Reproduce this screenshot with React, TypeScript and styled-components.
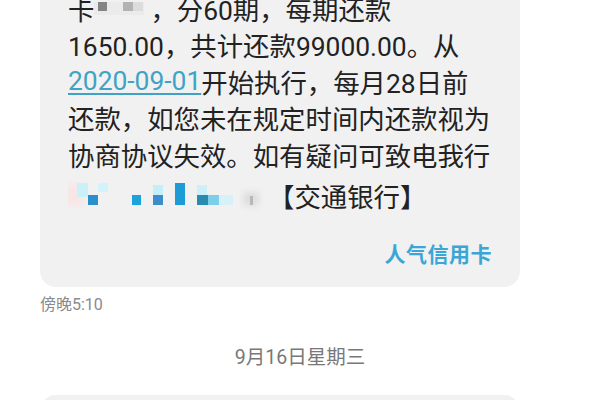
import React from "react";
import styled, { createGlobalStyle } from "styled-components";

const Global = createGlobalStyle`
  html, body { margin: 0; padding: 0; background: #ffffff; }
  body { width: 600px; height: 400px; overflow: hidden; font-family: Roboto, "Noto Sans CJK SC", sans-serif; }
`;

const Thread = styled.div`
  display: flex;
  flex-direction: column;
  margin-top: -28px;
`;

const Bubble = styled.div<{ $tall?: boolean }>`
  margin: 0 80px 0 40px;
  background: #f1f1f1;
  border-radius: 16px;
  padding: ${(p) => (p.$tall ? "0" : "18px 26px 20px 28px")};
  height: ${(p) => (p.$tall ? "120px" : "auto")};
  display: flex;
  flex-direction: column;
`;

const Line = styled.div<{ $gap?: number }>`
  display: flex;
  align-items: center;
  height: 36.5px;
  margin-top: ${(p) => p.$gap ?? 0}px;
  font-size: 26.4px;
  color: #222222;
  white-space: nowrap;
`;

const Link = styled.span`
  color: #3ea3c6;
  text-decoration: underline;
  text-decoration-thickness: 1.5px;
  text-underline-offset: 3px;
`;

const Mosaic = styled.svg`
  flex: none;
  display: block;
`;

const Sender = styled.div`
  margin-top: 29px;
  align-self: flex-end;
  margin-right: 2px;
  height: 24px;
  line-height: 24px;
  font-size: 21px;
  font-weight: 600;
  color: #3ba6d6;
  letter-spacing: 0.5px;
`;

const Time = styled.div`
  margin: 8px 0 0 40px;
  height: 20px;
  line-height: 20px;
  font-size: 16px;
  color: #8a8a8a;
`;

const DateDivider = styled.div`
  margin: 31px 0 25px;
  height: 24px;
  line-height: 24px;
  text-align: center;
  font-size: 19.5px;
  color: #787878;
`;

const FirstMask = () => (
  <Mosaic width="56" height="36" viewBox="0 0 56 36">
    <defs>
      <filter id="b1" x="-20%" y="-20%" width="140%" height="140%">
        <feGaussianBlur stdDeviation="0.5" />
      </filter>
    </defs>
    <g filter="url(#b1)">
      <rect x="0" y="12" width="50" height="13" fill="#ebebeb" />
      <rect x="4" y="12" width="9" height="9" fill="#858585" />
      <rect x="29" y="12" width="10" height="9" fill="#b3b3b3" />
      <rect x="39" y="12" width="10" height="9" fill="#dcdcdc" />
    </g>
  </Mosaic>
);

const PhoneMask = () => (
  <Mosaic width="200" height="36" viewBox="0 0 200 36">
    <defs>
      <filter id="b2" x="-10%" y="-30%" width="120%" height="160%">
        <feGaussianBlur stdDeviation="0.7" />
      </filter>
      <filter id="b3" x="-30%" y="-50%" width="160%" height="200%">
        <feGaussianBlur stdDeviation="3" />
      </filter>
    </defs>
    <rect x="-6" y="6" width="22" height="22" fill="#f8e6e6" filter="url(#b3)" />
    <rect x="175" y="14" width="16" height="14" fill="#dedede" filter="url(#b3)" />
    <g filter="url(#b2)">
      <rect x="9" y="5" width="11" height="14" fill="#c9f1f8" />
      <rect x="30" y="5" width="10" height="9" fill="#d2f3fa" />
      <rect x="20" y="17" width="10" height="10" fill="#2c8fcb" />
      <rect x="64" y="17" width="9" height="10" fill="#1ea2dc" />
      <rect x="85" y="7" width="10" height="10" fill="#c4eef8" />
      <rect x="85" y="17" width="10" height="10" fill="#3a8dcb" />
      <rect x="107" y="5" width="10" height="22" fill="#1f9bd6" />
      <rect x="129" y="7" width="10" height="10" fill="#cdeff8" />
      <rect x="129" y="17" width="11" height="10" fill="#2b8bb0" />
      <rect x="140" y="17" width="11" height="10" fill="#7ccfe8" />
      <rect x="151" y="17" width="14" height="10" fill="#d6f1f8" />
      <rect x="182" y="18" width="3" height="9" fill="#b8b8b8" />
    </g>
  </Mosaic>
);

export default function App() {
  return (
    <>
      <Global />
      <Thread>
        <Bubble>
          <Line>
            卡<FirstMask />，分60期，每期还款
          </Line>
          <Line>1650.00，共计还款99000.00。从</Line>
          <Line>
            <Link>2020-09-01</Link>开始执行，每月28日前
          </Line>
          <Line>还款，如您未在规定时间内还款视为</Line>
          <Line>协商协议失效。如有疑问可致电我行</Line>
          <Line $gap={5}>
            <PhoneMask />【交通银行】
          </Line>
          <Sender>人气信用卡</Sender>
        </Bubble>
        <Time>傍晚5:10</Time>
        <DateDivider>9月16日星期三</DateDivider>
        <Bubble $tall />
      </Thread>
    </>
  );
}
